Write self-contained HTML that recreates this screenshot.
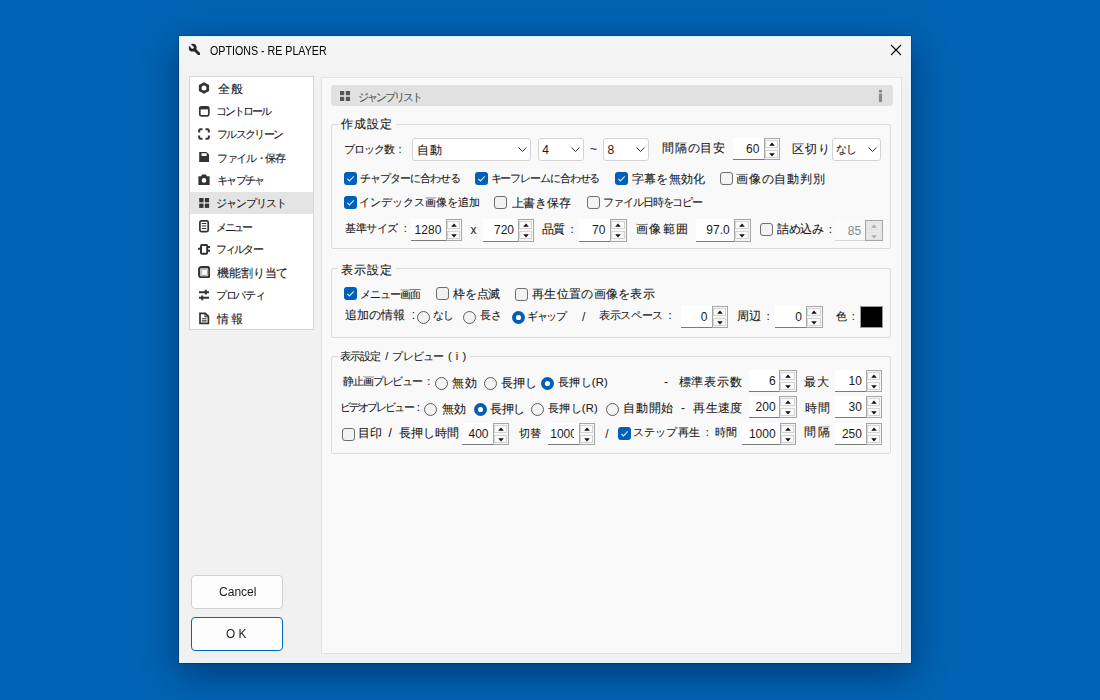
<!DOCTYPE html>
<html lang="ja"><head><meta charset="utf-8"><style>
html,body{margin:0;padding:0}
body{width:1100px;height:700px;overflow:hidden;position:relative;background:#0064b4;font-family:"Liberation Sans",sans-serif}
.a{position:absolute}
.t{position:absolute;white-space:pre;line-height:1;font-size:12px;transform-origin:0 0}
.num{transform:none}
.win{left:179px;top:36px;width:732px;height:627px;background:linear-gradient(#f5f5f5,#f1f1f1 60px,#f1f1f1);border:1px solid #e4f2fa;box-sizing:border-box;box-shadow:0 10px 36px rgba(0,15,50,.5),0 0 0 1px rgba(0,40,90,.3)}
.nav{left:189px;top:76px;width:123px;height:252px;background:#fff;border:1px solid #d6d6d6}
.sel{left:190px;top:192px;width:123px;height:22px;background:#e4e4e4}
.panel{left:321px;top:77px;width:579px;height:575px;background:#f9f9f9;border:1px solid #e3e3e3}
.hdr{left:331px;top:85px;width:562px;height:21px;background:#e1e1e1;border-radius:3px}
.grp{border:1px solid #dcdcdc;border-radius:2px}
.glab{background:#f9f9f9;height:8px}
.btn{border:1px solid #d0d0d0;border-radius:4px;background:#fdfdfd}
.okb{border:1px solid #0067c0;border-radius:4px;background:#fdfdfd}
.combo{background:#fff;border:1px solid #d4d4d4;border-radius:3px;box-sizing:border-box}
.spin-in{border-bottom:1px solid #7a7a7a;box-sizing:border-box}
.spin-btn{border:1px solid #a6a6a6;box-sizing:border-box}
.spin-sub{border:1px solid #d4d4d4;background:#fafafa;box-sizing:border-box}
</style></head><body>
<div class="a win"></div>
<div class="a nav"></div>
<div class="a sel"></div>
<div class="a btn" style="left:191px;top:575px;width:90px;height:32px"></div>
<div class="a okb" style="left:191px;top:617px;width:90px;height:32px"></div>
<div class="a panel"></div>
<div class="a hdr"></div>
<div class="a grp" style="left:331px;top:124px;width:558px;height:123px"></div>
<div class="a glab" style="left:338px;top:120px;width:58px"></div>
<div class="a grp" style="left:331px;top:268px;width:558px;height:68px"></div>
<div class="a glab" style="left:338px;top:264px;width:58px"></div>
<div class="a grp" style="left:331px;top:356px;width:558px;height:96px"></div>
<div class="a glab" style="left:338px;top:352px;width:132px"></div>
<div class="a" style="left:860px;top:306px;width:21px;height:20px;background:#000;border:1px solid #9a9a9a"></div>
<div class="t" style="left:590px;top:143px;font-size:12px;color:#1a1a1a">~</div>
<div class="t" style="left:664px;top:376px;color:#1a1a1a">-</div>
<div class="t" style="left:681px;top:402px;color:#1a1a1a">-</div>
<svg class="a" style="left:878px;top:89px" width="5" height="14" viewBox="0 0 5 14"><rect x="0.9" y="0.8" width="3.2" height="2.8" rx="1.2" fill="#8a8a8a"/><rect x="0.9" y="4.6" width="3.2" height="8.6" rx="1.2" fill="#8a8a8a"/></svg>
<svg class="a" style="left:198px;top:82px" width="12" height="12" viewBox="0 0 12 12"><path fill="#333" fill-rule="evenodd" d="M6 0.2L11.1 3.1V8.9L6 11.8L0.9 8.9V3.1Z M6 3.5A2.5 2.5 0 1 0 6 8.5A2.5 2.5 0 1 0 6 3.5Z"/></svg>
<svg class="a" style="left:198px;top:105px" width="12" height="12" viewBox="0 0 12 12"><rect x="1.8" y="1.8" width="9" height="9" rx="1.5" fill="none" stroke="#333" stroke-width="1.7"/><rect x="1.5" y="2" width="9.5" height="2.4" fill="#333"/></svg>
<svg class="a" style="left:198px;top:128px" width="12" height="12" viewBox="0 0 12 12"><path d="M1.2 4.5V2.5A1.3 1.3 0 0 1 2.5 1.2H4.5M7.5 1.2H9.5A1.3 1.3 0 0 1 10.8 2.5V4.5M10.8 7.5V9.5A1.3 1.3 0 0 1 9.5 10.8H7.5M4.5 10.8H2.5A1.3 1.3 0 0 1 1.2 9.5V7.5" fill="none" stroke="#333" stroke-width="2"/></svg>
<svg class="a" style="left:198px;top:151px" width="12" height="12" viewBox="0 0 12 12"><path fill="#333" fill-rule="evenodd" d="M1.2 1H8.5L11 3.5V11H1.2Z M3.5 2.2H8.7V5H3.5Z"/></svg>
<svg class="a" style="left:198px;top:174px" width="12" height="12" viewBox="0 0 12 12"><path fill="#333" fill-rule="evenodd" d="M4 0.6H8L8.8 2.2H11.6V11H0.4V2.2H3.2Z M6 4.1A2.3 2.3 0 1 0 6 8.7A2.3 2.3 0 1 0 6 4.1Z"/></svg>
<svg class="a" style="left:198px;top:197px" width="12" height="12" viewBox="0 0 12 12"><rect x="1.2" y="1" width="4.3" height="4.3" fill="#333"/><rect x="6.8" y="1" width="4.3" height="4.3" fill="#333"/><rect x="1.2" y="6.6" width="4.3" height="4.3" fill="#333"/><rect x="6.8" y="6.6" width="4.3" height="4.3" fill="#333"/></svg>
<svg class="a" style="left:198px;top:219px" width="12" height="14" viewBox="0 0 12 14"><rect x="1.9" y="1.9" width="8.3" height="10.8" rx="1.6" fill="none" stroke="#333" stroke-width="1.7"/><path d="M3.8 4.5H8.3M3.8 7H8.3M3.8 9.5H8.3" stroke="#333" stroke-width="1.2"/></svg>
<svg class="a" style="left:198px;top:243px" width="12" height="12" viewBox="0 0 12 12"><rect x="3" y="2.1" width="6.2" height="8.6" rx="1" fill="none" stroke="#333" stroke-width="2"/><path d="M0 5.7H2.5M9.5 3.9H12M9.5 7.8H12" stroke="#333" stroke-width="2"/></svg>
<svg class="a" style="left:198px;top:266px" width="12" height="12" viewBox="0 0 12 12"><rect x="1.1" y="1.1" width="10.2" height="10.2" rx="2.2" fill="none" stroke="#333" stroke-width="2.1"/><rect x="3.1" y="3.1" width="6.2" height="6.2" rx="0.8" fill="none" stroke="#8a8a8a" stroke-width="0.9"/></svg>
<svg class="a" style="left:198px;top:289px" width="12" height="12" viewBox="0 0 12 12"><path d="M1 3.2H11M1 8.8H11" stroke="#333" stroke-width="2"/><path d="M7.8 0.8V5.6M4.2 6.4V11.2" stroke="#333" stroke-width="2"/></svg>
<svg class="a" style="left:198px;top:312px" width="12" height="13" viewBox="0 0 12 13"><path fill="none" stroke="#333" stroke-width="1.7" d="M2 1.3H7.3L10.4 4.4V11.4H2Z"/><path d="M7 1.3V4.7H10.4" fill="none" stroke="#333" stroke-width="1.1"/><path d="M3.8 6.7H8.6M3.8 8.9H8.6" stroke="#333" stroke-width="1.1"/></svg>
<svg class="a" style="left:340px;top:91px" width="11" height="11" viewBox="0 0 11 11"><rect x="0" y="0" width="4.2" height="4.2" fill="#555"/><rect x="5.8" y="0" width="4.2" height="4.2" fill="#555"/><rect x="0" y="5.8" width="4.2" height="4.2" fill="#555"/><rect x="5.8" y="5.8" width="4.2" height="4.2" fill="#555"/></svg>

<svg class="a" style="left:188px;top:43px" width="13" height="13" viewBox="0 0 13 13"><defs><mask id="wm"><rect width="13" height="13" fill="#fff"/><path d="M4.6 4.6L0.5 0.5" stroke="#000" stroke-width="2.6"/><circle cx="4.6" cy="4.6" r="1.2" fill="#000"/></mask></defs><g mask="url(#wm)" fill="#262626"><circle cx="4.7" cy="4.7" r="3.9"/><path d="M4.7 4.7L11.2 11.2" stroke="#262626" stroke-width="2.9" stroke-linecap="round"/></g></svg>
<svg class="a" style="left:890px;top:44px" width="12" height="12" viewBox="0 0 12 12"><path d="M1 1L11 11M11 1L1 11" stroke="#000" stroke-width="1.1"/></svg>
<svg class="a" style="left:344px;top:172px" width="13" height="13" viewBox="0 0 13 13"><rect x="0" y="0" width="13" height="13" rx="3" fill="#005fb8"/><path d="M3.3 6.8L5.4 8.9L9.8 4.4" fill="none" stroke="#d8ecff" stroke-width="1.1"/></svg>
<svg class="a" style="left:475px;top:172px" width="13" height="13" viewBox="0 0 13 13"><rect x="0" y="0" width="13" height="13" rx="3" fill="#005fb8"/><path d="M3.3 6.8L5.4 8.9L9.8 4.4" fill="none" stroke="#d8ecff" stroke-width="1.1"/></svg>
<svg class="a" style="left:615px;top:172px" width="13" height="13" viewBox="0 0 13 13"><rect x="0" y="0" width="13" height="13" rx="3" fill="#005fb8"/><path d="M3.3 6.8L5.4 8.9L9.8 4.4" fill="none" stroke="#d8ecff" stroke-width="1.1"/></svg>
<svg class="a" style="left:720px;top:172px" width="13" height="13" viewBox="0 0 13 13"><rect x="0.5" y="0.5" width="12" height="12" rx="2.5" fill="#f2f2f2" stroke="#6e6e6e" stroke-width="1"/></svg>
<svg class="a" style="left:344px;top:196px" width="13" height="13" viewBox="0 0 13 13"><rect x="0" y="0" width="13" height="13" rx="3" fill="#005fb8"/><path d="M3.3 6.8L5.4 8.9L9.8 4.4" fill="none" stroke="#d8ecff" stroke-width="1.1"/></svg>
<svg class="a" style="left:494px;top:196px" width="13" height="13" viewBox="0 0 13 13"><rect x="0.5" y="0.5" width="12" height="12" rx="2.5" fill="#f2f2f2" stroke="#6e6e6e" stroke-width="1"/></svg>
<svg class="a" style="left:587px;top:196px" width="13" height="13" viewBox="0 0 13 13"><rect x="0.5" y="0.5" width="12" height="12" rx="2.5" fill="#f2f2f2" stroke="#6e6e6e" stroke-width="1"/></svg>
<svg class="a" style="left:760px;top:223px" width="13" height="13" viewBox="0 0 13 13"><rect x="0.5" y="0.5" width="12" height="12" rx="2.5" fill="#f2f2f2" stroke="#6e6e6e" stroke-width="1"/></svg>
<svg class="a" style="left:344px;top:287px" width="13" height="13" viewBox="0 0 13 13"><rect x="0" y="0" width="13" height="13" rx="3" fill="#005fb8"/><path d="M3.3 6.8L5.4 8.9L9.8 4.4" fill="none" stroke="#d8ecff" stroke-width="1.1"/></svg>
<svg class="a" style="left:436px;top:287px" width="13" height="13" viewBox="0 0 13 13"><rect x="0.5" y="0.5" width="12" height="12" rx="2.5" fill="#f2f2f2" stroke="#6e6e6e" stroke-width="1"/></svg>
<svg class="a" style="left:515px;top:288px" width="13" height="13" viewBox="0 0 13 13"><rect x="0.5" y="0.5" width="12" height="12" rx="2.5" fill="#f2f2f2" stroke="#6e6e6e" stroke-width="1"/></svg>
<svg class="a" style="left:342px;top:428px" width="13" height="13" viewBox="0 0 13 13"><rect x="0.5" y="0.5" width="12" height="12" rx="2.5" fill="#f2f2f2" stroke="#6e6e6e" stroke-width="1"/></svg>
<svg class="a" style="left:618px;top:427px" width="13" height="13" viewBox="0 0 13 13"><rect x="0" y="0" width="13" height="13" rx="3" fill="#005fb8"/><path d="M3.3 6.8L5.4 8.9L9.8 4.4" fill="none" stroke="#d8ecff" stroke-width="1.1"/></svg>
<svg class="a" style="left:417px;top:311px" width="13" height="13" viewBox="0 0 13 13"><circle cx="6.5" cy="6.5" r="6" fill="#f3f3f3" stroke="#5c5c5c" stroke-width="1"/></svg>
<svg class="a" style="left:463px;top:311px" width="13" height="13" viewBox="0 0 13 13"><circle cx="6.5" cy="6.5" r="6" fill="#f3f3f3" stroke="#5c5c5c" stroke-width="1"/></svg>
<svg class="a" style="left:512px;top:311px" width="13" height="13" viewBox="0 0 13 13"><circle cx="6.5" cy="6.5" r="6.5" fill="#005fb8"/><circle cx="6.5" cy="6.5" r="2.6" fill="#fff"/></svg>
<svg class="a" style="left:435px;top:377px" width="13" height="13" viewBox="0 0 13 13"><circle cx="6.5" cy="6.5" r="6" fill="#f3f3f3" stroke="#5c5c5c" stroke-width="1"/></svg>
<svg class="a" style="left:484px;top:377px" width="13" height="13" viewBox="0 0 13 13"><circle cx="6.5" cy="6.5" r="6" fill="#f3f3f3" stroke="#5c5c5c" stroke-width="1"/></svg>
<svg class="a" style="left:541px;top:377px" width="13" height="13" viewBox="0 0 13 13"><circle cx="6.5" cy="6.5" r="6.5" fill="#005fb8"/><circle cx="6.5" cy="6.5" r="2.6" fill="#fff"/></svg>
<svg class="a" style="left:424px;top:403px" width="13" height="13" viewBox="0 0 13 13"><circle cx="6.5" cy="6.5" r="6" fill="#f3f3f3" stroke="#5c5c5c" stroke-width="1"/></svg>
<svg class="a" style="left:474px;top:403px" width="13" height="13" viewBox="0 0 13 13"><circle cx="6.5" cy="6.5" r="6.5" fill="#005fb8"/><circle cx="6.5" cy="6.5" r="2.6" fill="#fff"/></svg>
<svg class="a" style="left:531px;top:403px" width="13" height="13" viewBox="0 0 13 13"><circle cx="6.5" cy="6.5" r="6" fill="#f3f3f3" stroke="#5c5c5c" stroke-width="1"/></svg>
<svg class="a" style="left:606px;top:403px" width="13" height="13" viewBox="0 0 13 13"><circle cx="6.5" cy="6.5" r="6" fill="#f3f3f3" stroke="#5c5c5c" stroke-width="1"/></svg>
<div class="a combo" style="left:412px;top:138px;width:119px;height:23px"></div>
<svg class="a" style="left:518px;top:147px" width="9" height="5" viewBox="0 0 9 5"><path d="M0.5 0.5L4.5 4.5L8.5 0.5" fill="none" stroke="#333" stroke-width="1"/></svg>
<div class="a combo" style="left:538px;top:138px;width:46px;height:23px"></div>
<svg class="a" style="left:571px;top:147px" width="9" height="5" viewBox="0 0 9 5"><path d="M0.5 0.5L4.5 4.5L8.5 0.5" fill="none" stroke="#333" stroke-width="1"/></svg>
<div class="a combo" style="left:603px;top:138px;width:46px;height:23px"></div>
<svg class="a" style="left:636px;top:147px" width="9" height="5" viewBox="0 0 9 5"><path d="M0.5 0.5L4.5 4.5L8.5 0.5" fill="none" stroke="#333" stroke-width="1"/></svg>
<div class="a combo" style="left:832px;top:138px;width:49px;height:23px"></div>
<svg class="a" style="left:868px;top:147px" width="9" height="5" viewBox="0 0 9 5"><path d="M0.5 0.5L4.5 4.5L8.5 0.5" fill="none" stroke="#333" stroke-width="1"/></svg>
<div class="a spin-in" style="left:733px;top:138px;width:31px;height:22px;background:#fff;"></div>
<div class="a spin-btn" style="left:764px;top:138px;width:16px;height:22px;background:#f7f7f7"></div>
<div class="a spin-sub" style="left:765px;top:140px;width:13px;height:8px;"></div>
<div class="a spin-sub" style="left:765px;top:150px;width:13px;height:8px;"></div>
<svg class="a" style="left:768.5px;top:142px" width="6" height="4" viewBox="0 0 6 4"><path d="M0.2 3.8L3 0.4L5.8 3.8Z" fill="#111"/></svg>
<svg class="a" style="left:768.5px;top:153px" width="6" height="4" viewBox="0 0 6 4"><path d="M0.2 0.2L3 3.6L5.8 0.2Z" fill="#111"/></svg>
<div class="t num" style="right:340.6px;top:143px;color:#1a1a1a;">60</div>
<div class="a spin-in" style="left:411px;top:219px;width:35px;height:22px;background:#fff;"></div>
<div class="a spin-btn" style="left:446px;top:219px;width:16px;height:22px;background:#f7f7f7"></div>
<div class="a spin-sub" style="left:447px;top:221px;width:13px;height:8px;"></div>
<div class="a spin-sub" style="left:447px;top:231px;width:13px;height:8px;"></div>
<svg class="a" style="left:450.5px;top:223px" width="6" height="4" viewBox="0 0 6 4"><path d="M0.2 3.8L3 0.4L5.8 3.8Z" fill="#111"/></svg>
<svg class="a" style="left:450.5px;top:234px" width="6" height="4" viewBox="0 0 6 4"><path d="M0.2 0.2L3 3.6L5.8 0.2Z" fill="#111"/></svg>
<div class="t num" style="right:658.7px;top:224px;color:#1a1a1a;">1280</div>
<div class="a spin-in" style="left:483px;top:219px;width:35px;height:23px;background:#fff;"></div>
<div class="a spin-btn" style="left:518px;top:219px;width:16px;height:23px;background:#f7f7f7"></div>
<div class="a spin-sub" style="left:519px;top:221px;width:13px;height:8px;"></div>
<div class="a spin-sub" style="left:519px;top:231px;width:13px;height:8px;"></div>
<svg class="a" style="left:522.5px;top:223px" width="6" height="4" viewBox="0 0 6 4"><path d="M0.2 3.8L3 0.4L5.8 3.8Z" fill="#111"/></svg>
<svg class="a" style="left:522.5px;top:234px" width="6" height="4" viewBox="0 0 6 4"><path d="M0.2 0.2L3 3.6L5.8 0.2Z" fill="#111"/></svg>
<div class="t num" style="right:586.0px;top:224px;color:#1a1a1a;">720</div>
<div class="a spin-in" style="left:579px;top:219px;width:31px;height:23px;background:#fff;"></div>
<div class="a spin-btn" style="left:610px;top:219px;width:17px;height:23px;background:#f7f7f7"></div>
<div class="a spin-sub" style="left:611px;top:221px;width:14px;height:8px;"></div>
<div class="a spin-sub" style="left:611px;top:231px;width:14px;height:8px;"></div>
<svg class="a" style="left:615.0px;top:223px" width="6" height="4" viewBox="0 0 6 4"><path d="M0.2 3.8L3 0.4L5.8 3.8Z" fill="#111"/></svg>
<svg class="a" style="left:615.0px;top:234px" width="6" height="4" viewBox="0 0 6 4"><path d="M0.2 0.2L3 3.6L5.8 0.2Z" fill="#111"/></svg>
<div class="t num" style="right:494.7px;top:224px;color:#1a1a1a;">70</div>
<div class="a spin-in" style="left:696px;top:219px;width:38px;height:23px;background:#fff;"></div>
<div class="a spin-btn" style="left:734px;top:219px;width:17px;height:23px;background:#f7f7f7"></div>
<div class="a spin-sub" style="left:735px;top:221px;width:14px;height:8px;"></div>
<div class="a spin-sub" style="left:735px;top:231px;width:14px;height:8px;"></div>
<svg class="a" style="left:739.0px;top:223px" width="6" height="4" viewBox="0 0 6 4"><path d="M0.2 3.8L3 0.4L5.8 3.8Z" fill="#111"/></svg>
<svg class="a" style="left:739.0px;top:234px" width="6" height="4" viewBox="0 0 6 4"><path d="M0.2 0.2L3 3.6L5.8 0.2Z" fill="#111"/></svg>
<div class="t num" style="right:370.3px;top:224px;color:#1a1a1a;">97.0</div>
<div class="a spin-in" style="left:835px;top:220px;width:30px;height:21px;background:#fbfbfb;border-bottom-color:#d6d6d6;"></div>
<div class="a spin-btn" style="left:865px;top:220px;width:18px;height:21px;background:#e9e9e9"></div>
<div class="a spin-sub" style="left:866px;top:222px;width:15px;height:8px;background:#e9e9e9;border-color:#e2e2e2;"></div>
<div class="a spin-sub" style="left:866px;top:232px;width:15px;height:8px;background:#e9e9e9;border-color:#e2e2e2;"></div>
<svg class="a" style="left:870.5px;top:224px" width="6" height="4" viewBox="0 0 6 4"><path d="M0.2 3.8L3 0.4L5.8 3.8Z" fill="#aaa"/></svg>
<svg class="a" style="left:870.5px;top:235px" width="6" height="4" viewBox="0 0 6 4"><path d="M0.2 0.2L3 3.6L5.8 0.2Z" fill="#aaa"/></svg>
<div class="t num" style="right:238.8px;top:225px;color:#888;">85</div>
<div class="a spin-in" style="left:681px;top:306px;width:31px;height:22px;background:#fff;"></div>
<div class="a spin-btn" style="left:712px;top:306px;width:16px;height:22px;background:#f7f7f7"></div>
<div class="a spin-sub" style="left:713px;top:308px;width:13px;height:8px;"></div>
<div class="a spin-sub" style="left:713px;top:318px;width:13px;height:8px;"></div>
<svg class="a" style="left:716.5px;top:310px" width="6" height="4" viewBox="0 0 6 4"><path d="M0.2 3.8L3 0.4L5.8 3.8Z" fill="#111"/></svg>
<svg class="a" style="left:716.5px;top:321px" width="6" height="4" viewBox="0 0 6 4"><path d="M0.2 0.2L3 3.6L5.8 0.2Z" fill="#111"/></svg>
<div class="t num" style="right:392.5px;top:311px;color:#1a1a1a;">0</div>
<div class="a spin-in" style="left:775px;top:306px;width:31px;height:22px;background:#fff;"></div>
<div class="a spin-btn" style="left:806px;top:306px;width:17px;height:22px;background:#f7f7f7"></div>
<div class="a spin-sub" style="left:807px;top:308px;width:14px;height:8px;"></div>
<div class="a spin-sub" style="left:807px;top:318px;width:14px;height:8px;"></div>
<svg class="a" style="left:811.0px;top:310px" width="6" height="4" viewBox="0 0 6 4"><path d="M0.2 3.8L3 0.4L5.8 3.8Z" fill="#111"/></svg>
<svg class="a" style="left:811.0px;top:321px" width="6" height="4" viewBox="0 0 6 4"><path d="M0.2 0.2L3 3.6L5.8 0.2Z" fill="#111"/></svg>
<div class="t num" style="right:298.1px;top:311px;color:#1a1a1a;">0</div>
<div class="a spin-in" style="left:749px;top:370px;width:30px;height:22px;background:#fff;"></div>
<div class="a spin-btn" style="left:779px;top:370px;width:18px;height:22px;background:#f7f7f7"></div>
<div class="a spin-sub" style="left:780px;top:372px;width:15px;height:8px;"></div>
<div class="a spin-sub" style="left:780px;top:382px;width:15px;height:8px;"></div>
<svg class="a" style="left:784.5px;top:374px" width="6" height="4" viewBox="0 0 6 4"><path d="M0.2 3.8L3 0.4L5.8 3.8Z" fill="#111"/></svg>
<svg class="a" style="left:784.5px;top:385px" width="6" height="4" viewBox="0 0 6 4"><path d="M0.2 0.2L3 3.6L5.8 0.2Z" fill="#111"/></svg>
<div class="t num" style="right:324.4px;top:375px;color:#1a1a1a;">6</div>
<div class="a spin-in" style="left:835px;top:370px;width:31px;height:22px;background:#fff;"></div>
<div class="a spin-btn" style="left:866px;top:370px;width:16px;height:22px;background:#f7f7f7"></div>
<div class="a spin-sub" style="left:867px;top:372px;width:13px;height:8px;"></div>
<div class="a spin-sub" style="left:867px;top:382px;width:13px;height:8px;"></div>
<svg class="a" style="left:870.5px;top:374px" width="6" height="4" viewBox="0 0 6 4"><path d="M0.2 3.8L3 0.4L5.8 3.8Z" fill="#111"/></svg>
<svg class="a" style="left:870.5px;top:385px" width="6" height="4" viewBox="0 0 6 4"><path d="M0.2 0.2L3 3.6L5.8 0.2Z" fill="#111"/></svg>
<div class="t num" style="right:238.1px;top:375px;color:#1a1a1a;">10</div>
<div class="a spin-in" style="left:749px;top:396px;width:30px;height:22px;background:#fff;"></div>
<div class="a spin-btn" style="left:779px;top:396px;width:18px;height:22px;background:#f7f7f7"></div>
<div class="a spin-sub" style="left:780px;top:398px;width:15px;height:8px;"></div>
<div class="a spin-sub" style="left:780px;top:408px;width:15px;height:8px;"></div>
<svg class="a" style="left:784.5px;top:400px" width="6" height="4" viewBox="0 0 6 4"><path d="M0.2 3.8L3 0.4L5.8 3.8Z" fill="#111"/></svg>
<svg class="a" style="left:784.5px;top:411px" width="6" height="4" viewBox="0 0 6 4"><path d="M0.2 0.2L3 3.6L5.8 0.2Z" fill="#111"/></svg>
<div class="t num" style="right:324.4px;top:401px;color:#1a1a1a;">200</div>
<div class="a spin-in" style="left:835px;top:396px;width:31px;height:22px;background:#fff;"></div>
<div class="a spin-btn" style="left:866px;top:396px;width:16px;height:22px;background:#f7f7f7"></div>
<div class="a spin-sub" style="left:867px;top:398px;width:13px;height:8px;"></div>
<div class="a spin-sub" style="left:867px;top:408px;width:13px;height:8px;"></div>
<svg class="a" style="left:870.5px;top:400px" width="6" height="4" viewBox="0 0 6 4"><path d="M0.2 3.8L3 0.4L5.8 3.8Z" fill="#111"/></svg>
<svg class="a" style="left:870.5px;top:411px" width="6" height="4" viewBox="0 0 6 4"><path d="M0.2 0.2L3 3.6L5.8 0.2Z" fill="#111"/></svg>
<div class="t num" style="right:238.1px;top:401px;color:#1a1a1a;">30</div>
<div class="a spin-in" style="left:462px;top:423px;width:31px;height:22px;background:#fff;"></div>
<div class="a spin-btn" style="left:493px;top:423px;width:16px;height:22px;background:#f7f7f7"></div>
<div class="a spin-sub" style="left:494px;top:425px;width:13px;height:8px;"></div>
<div class="a spin-sub" style="left:494px;top:435px;width:13px;height:8px;"></div>
<svg class="a" style="left:497.5px;top:427px" width="6" height="4" viewBox="0 0 6 4"><path d="M0.2 3.8L3 0.4L5.8 3.8Z" fill="#111"/></svg>
<svg class="a" style="left:497.5px;top:438px" width="6" height="4" viewBox="0 0 6 4"><path d="M0.2 0.2L3 3.6L5.8 0.2Z" fill="#111"/></svg>
<div class="t num" style="right:611.5px;top:428px;color:#1a1a1a;">400</div>
<div class="a spin-in" style="left:548px;top:423px;width:31px;height:22px;background:#fff;"></div>
<div class="a spin-btn" style="left:579px;top:423px;width:16px;height:22px;background:#f7f7f7"></div>
<div class="a spin-sub" style="left:580px;top:425px;width:13px;height:8px;"></div>
<div class="a spin-sub" style="left:580px;top:435px;width:13px;height:8px;"></div>
<svg class="a" style="left:583.5px;top:427px" width="6" height="4" viewBox="0 0 6 4"><path d="M0.2 3.8L3 0.4L5.8 3.8Z" fill="#111"/></svg>
<svg class="a" style="left:583.5px;top:438px" width="6" height="4" viewBox="0 0 6 4"><path d="M0.2 0.2L3 3.6L5.8 0.2Z" fill="#111"/></svg>
<div class="t num" style="right:523.1px;top:428px;color:#1a1a1a;clip-path:inset(0 3px 0 0);">1000</div>
<div class="a spin-in" style="left:742px;top:423px;width:38px;height:22px;background:#fff;"></div>
<div class="a spin-btn" style="left:780px;top:423px;width:16px;height:22px;background:#f7f7f7"></div>
<div class="a spin-sub" style="left:781px;top:425px;width:13px;height:8px;"></div>
<div class="a spin-sub" style="left:781px;top:435px;width:13px;height:8px;"></div>
<svg class="a" style="left:784.5px;top:427px" width="6" height="4" viewBox="0 0 6 4"><path d="M0.2 3.8L3 0.4L5.8 3.8Z" fill="#111"/></svg>
<svg class="a" style="left:784.5px;top:438px" width="6" height="4" viewBox="0 0 6 4"><path d="M0.2 0.2L3 3.6L5.8 0.2Z" fill="#111"/></svg>
<div class="t num" style="right:324.4px;top:428px;color:#1a1a1a;">1000</div>
<div class="a spin-in" style="left:835px;top:423px;width:31px;height:22px;background:#fff;"></div>
<div class="a spin-btn" style="left:866px;top:423px;width:16px;height:22px;background:#f7f7f7"></div>
<div class="a spin-sub" style="left:867px;top:425px;width:13px;height:8px;"></div>
<div class="a spin-sub" style="left:867px;top:435px;width:13px;height:8px;"></div>
<svg class="a" style="left:870.5px;top:427px" width="6" height="4" viewBox="0 0 6 4"><path d="M0.2 3.8L3 0.4L5.8 3.8Z" fill="#111"/></svg>
<svg class="a" style="left:870.5px;top:438px" width="6" height="4" viewBox="0 0 6 4"><path d="M0.2 0.2L3 3.6L5.8 0.2Z" fill="#111"/></svg>
<div class="t num" style="right:238.1px;top:428px;color:#1a1a1a;">250</div>
<div class="t" style="left:209.50px;top:45.00px;color:#000;font-size:12px;transform:scaleX(0.889)">OPTIONS - RE PLAYER</div>
<div class="t" style="left:217.80px;top:82.85px;color:#1a1a1a;font-size:12.30px;-webkit-text-stroke:0.1px currentColor;letter-spacing:0.800px">全般</div>
<div class="t" style="left:215.80px;top:105.95px;color:#1a1a1a;font-size:11.00px;-webkit-text-stroke:0.1px currentColor;letter-spacing:-2.000px">コントロール</div>
<div class="t" style="left:217.00px;top:128.50px;color:#1a1a1a;font-size:11.00px;-webkit-text-stroke:0.1px currentColor;letter-spacing:-1.667px">フルスクリーン</div>
<div class="t" style="left:217.00px;top:152.50px;color:#1a1a1a;font-size:11.00px;-webkit-text-stroke:0.1px currentColor;letter-spacing:-1.333px">ファイル・保存</div>
<div class="t" style="left:217.00px;top:175.00px;color:#1a1a1a;font-size:11.00px;-webkit-text-stroke:0.1px currentColor;letter-spacing:-1.750px">キャプチャ</div>
<div class="t" style="left:216.00px;top:197.75px;color:#1a1a1a;font-size:11.00px;-webkit-text-stroke:0.1px currentColor;letter-spacing:-1.067px">ジャンプリスト</div>
<div class="t" style="left:216.00px;top:222.15px;color:#1a1a1a;font-size:11.00px;-webkit-text-stroke:0.1px currentColor;letter-spacing:-2.333px">メニュー</div>
<div class="t" style="left:216.00px;top:243.60px;color:#1a1a1a;font-size:11.00px;-webkit-text-stroke:0.1px currentColor;letter-spacing:-1.850px">フィルター</div>
<div class="t" style="left:217.00px;top:267.75px;color:#1a1a1a;font-size:11.91px;-webkit-text-stroke:0.1px currentColor;letter-spacing:-0.120px">機能割り当て</div>
<div class="t" style="left:216.00px;top:290.35px;color:#1a1a1a;font-size:11.00px;-webkit-text-stroke:0.1px currentColor;letter-spacing:-1.275px">プロパティ</div>
<div class="t" style="left:217.00px;top:312.95px;color:#1a1a1a;font-size:12.30px;-webkit-text-stroke:0.1px currentColor;letter-spacing:2.400px">情報</div>
<div class="t" style="left:357.60px;top:91.50px;color:#555;font-size:11.00px;-webkit-text-stroke:0.1px currentColor;letter-spacing:-1.850px">ジャンプリスト</div>
<div class="t" style="left:341.00px;top:118.25px;color:#1a1a1a;font-size:12.30px;-webkit-text-stroke:0.1px currentColor;letter-spacing:1.000px">作成設定</div>
<div class="t" style="left:344.20px;top:143.55px;color:#1a1a1a;font-size:11.00px;-webkit-text-stroke:0.1px currentColor;word-spacing:3px;letter-spacing:-1.117px">ブロック数 :</div>
<div class="t" style="left:416.70px;top:143.50px;color:#1a1a1a;font-size:12.30px;-webkit-text-stroke:0.1px currentColor;letter-spacing:1.600px">自動</div>
<div class="t" style="left:662.00px;top:142.40px;color:#1a1a1a;font-size:12.30px;-webkit-text-stroke:0.1px currentColor;letter-spacing:0.750px">間隔の目安</div>
<div class="t" style="left:792.40px;top:143.00px;color:#1a1a1a;font-size:12.17px;-webkit-text-stroke:0.1px currentColor;letter-spacing:0.600px">区切り</div>
<div class="t" style="left:835.60px;top:143.70px;color:#1a1a1a;font-size:11.00px;-webkit-text-stroke:0.1px currentColor;letter-spacing:-0.400px">なし</div>
<div class="t" style="left:360.00px;top:173.25px;color:#1a1a1a;font-size:11.00px;-webkit-text-stroke:0.1px currentColor;letter-spacing:-0.956px">チャプターに合わせる</div>
<div class="t" style="left:490.60px;top:173.25px;color:#1a1a1a;font-size:11.00px;-webkit-text-stroke:0.1px currentColor;letter-spacing:-1.120px">キーフレームに合わせる</div>
<div class="t" style="left:631.90px;top:172.75px;color:#1a1a1a;font-size:12.25px;-webkit-text-stroke:0.1px currentColor;letter-spacing:0.300px">字幕を無効化</div>
<div class="t" style="left:735.90px;top:172.75px;color:#1a1a1a;font-size:12.30px;-webkit-text-stroke:0.1px currentColor;letter-spacing:0.867px">画像の自動判別</div>
<div class="t" style="left:359.00px;top:197.10px;color:#1a1a1a;font-size:11.01px;-webkit-text-stroke:0.1px currentColor;letter-spacing:0.010px">インデックス画像を追加</div>
<div class="t" style="left:511.50px;top:197.60px;color:#1a1a1a;font-size:11.84px;-webkit-text-stroke:0.1px currentColor;letter-spacing:-0.200px">上書き保存</div>
<div class="t" style="left:603.20px;top:197.10px;color:#1a1a1a;font-size:11.00px;-webkit-text-stroke:0.1px currentColor;letter-spacing:-1.111px">ファイル日時をコピー</div>
<div class="t" style="left:344.90px;top:222.90px;color:#1a1a1a;font-size:11.00px;-webkit-text-stroke:0.1px currentColor;word-spacing:3px;letter-spacing:-0.383px">基準サイズ :</div>
<div class="t" style="left:541.80px;top:223.75px;color:#1a1a1a;font-size:11.51px;-webkit-text-stroke:0.1px currentColor;word-spacing:3px;letter-spacing:-0.533px">品質 :</div>
<div class="t" style="left:635.80px;top:222.75px;color:#1a1a1a;font-size:12.30px;-webkit-text-stroke:0.1px currentColor;letter-spacing:1.467px">画像範囲</div>
<div class="t" style="left:777.00px;top:224.40px;color:#1a1a1a;font-size:11.55px;-webkit-text-stroke:0.1px currentColor;word-spacing:3px;letter-spacing:-0.480px">詰め込み :</div>
<div class="t" style="left:340.70px;top:263.65px;color:#1a1a1a;font-size:12.30px;-webkit-text-stroke:0.1px currentColor;letter-spacing:1.133px">表示設定</div>
<div class="t" style="left:359.70px;top:288.50px;color:#1a1a1a;font-size:11.00px;-webkit-text-stroke:0.1px currentColor;letter-spacing:-0.900px">メニュー画面</div>
<div class="t" style="left:453.40px;top:287.65px;color:#1a1a1a;font-size:11.78px;-webkit-text-stroke:0.1px currentColor;letter-spacing:-0.300px">枠を点滅</div>
<div class="t" style="left:532.10px;top:287.65px;color:#1a1a1a;font-size:12.27px;-webkit-text-stroke:0.1px currentColor;letter-spacing:0.300px">再生位置の画像を表示</div>
<div class="t" style="left:344.80px;top:309.35px;color:#1a1a1a;font-size:12.13px;-webkit-text-stroke:0.1px currentColor;word-spacing:3px;letter-spacing:0.083px">追加の情報 :</div>
<div class="t" style="left:433.10px;top:310.00px;color:#1a1a1a;font-size:11.00px;-webkit-text-stroke:0.1px currentColor;letter-spacing:-0.600px">なし</div>
<div class="t" style="left:480.30px;top:310.30px;color:#1a1a1a;font-size:11.11px;-webkit-text-stroke:0.1px currentColor;letter-spacing:0.200px">長さ</div>
<div class="t" style="left:527.40px;top:310.80px;color:#1a1a1a;font-size:11.00px;-webkit-text-stroke:0.1px currentColor;letter-spacing:-1.600px">ギャップ</div>
<div class="t" style="left:599.20px;top:310.30px;color:#1a1a1a;font-size:11.00px;-webkit-text-stroke:0.1px currentColor;word-spacing:3px;letter-spacing:-0.386px">表示スペース :</div>
<div class="t" style="left:736.70px;top:309.85px;color:#1a1a1a;font-size:11.62px;-webkit-text-stroke:0.1px currentColor;word-spacing:3px;letter-spacing:-0.100px">周辺 :</div>
<div class="t" style="left:835.90px;top:311.00px;color:#1a1a1a;font-size:11.00px;-webkit-text-stroke:0.1px currentColor;word-spacing:3px;letter-spacing:-0.650px">色 :</div>
<div class="t" style="left:339.70px;top:351.40px;color:#1a1a1a;font-size:11.00px;-webkit-text-stroke:0.1px currentColor;word-spacing:3px;letter-spacing:-0.918px">表示設定 / プレビュー ( i )</div>
<div class="t" style="left:342.70px;top:376.10px;color:#1a1a1a;font-size:11.00px;-webkit-text-stroke:0.1px currentColor;word-spacing:3px;letter-spacing:-1.044px">静止画プレビュー :</div>
<div class="t" style="left:452.30px;top:377.40px;color:#1a1a1a;font-size:12.30px;-webkit-text-stroke:0.1px currentColor;letter-spacing:0.700px">無効</div>
<div class="t" style="left:500.90px;top:376.50px;color:#1a1a1a;font-size:12.06px;-webkit-text-stroke:0.1px currentColor;letter-spacing:0.000px">長押し</div>
<div class="t" style="left:558.10px;top:377.25px;color:#1a1a1a;font-size:11.25px;-webkit-text-stroke:0.1px currentColor;letter-spacing:0.220px">長押し(R)</div>
<div class="t" style="left:678.50px;top:375.70px;color:#1a1a1a;font-size:12.30px;-webkit-text-stroke:0.1px currentColor;letter-spacing:0.825px">標準表示数</div>
<div class="t" style="left:803.70px;top:375.55px;color:#1a1a1a;font-size:12.15px;-webkit-text-stroke:0.1px currentColor;letter-spacing:1.300px">最大</div>
<div class="t" style="left:340.30px;top:402.25px;color:#1a1a1a;font-size:11.00px;-webkit-text-stroke:0.1px currentColor;word-spacing:3px;letter-spacing:-1.967px">ビデオプレビュー :</div>
<div class="t" style="left:441.60px;top:403.20px;color:#1a1a1a;font-size:12.30px;-webkit-text-stroke:0.1px currentColor;letter-spacing:0.800px">無効</div>
<div class="t" style="left:489.90px;top:403.50px;color:#1a1a1a;font-size:11.92px;-webkit-text-stroke:0.1px currentColor;letter-spacing:-0.200px">長押し</div>
<div class="t" style="left:548.30px;top:403.25px;color:#1a1a1a;font-size:11.18px;-webkit-text-stroke:0.1px currentColor;letter-spacing:0.160px">長押し(R)</div>
<div class="t" style="left:623.00px;top:402.25px;color:#1a1a1a;font-size:12.30px;-webkit-text-stroke:0.1px currentColor;letter-spacing:0.833px">自動開始</div>
<div class="t" style="left:693.10px;top:402.00px;color:#1a1a1a;font-size:12.30px;-webkit-text-stroke:0.1px currentColor;letter-spacing:0.467px">再生速度</div>
<div class="t" style="left:804.70px;top:401.60px;color:#1a1a1a;font-size:12.30px;-webkit-text-stroke:0.1px currentColor;letter-spacing:1.300px">時間</div>
<div class="t" style="left:357.70px;top:427.30px;color:#1a1a1a;font-size:12.04px;-webkit-text-stroke:0.1px currentColor;word-spacing:3px;letter-spacing:0.167px">目印 / 長押し時間</div>
<div class="t" style="left:518.80px;top:427.50px;color:#1a1a1a;font-size:11.05px;-webkit-text-stroke:0.1px currentColor;letter-spacing:0.100px">切替</div>
<div class="t" style="left:633.20px;top:427.10px;color:#1a1a1a;font-size:11.09px;-webkit-text-stroke:0.1px currentColor;word-spacing:3px;letter-spacing:0.080px">ステップ再生 : 時間</div>
<div class="t" style="left:803.70px;top:426.35px;color:#1a1a1a;font-size:12.30px;-webkit-text-stroke:0.1px currentColor;letter-spacing:2.300px">間隔</div>
<div class="t" style="left:218.60px;top:586.10px;color:#1a1a1a;font-size:12px;transform:scaleX(1.003)">Cancel</div>
<div class="t" style="left:226.40px;top:628.20px;color:#1a1a1a;font-size:12px;transform:scaleX(0.986)">O K</div>
<div class="t" style="left:542.30px;top:144.15px;color:#1a1a1a;font-size:12px;transform:scaleX(1.000)">4</div>
<div class="t" style="left:607.60px;top:144.15px;color:#1a1a1a;font-size:12px;transform:scaleX(1.000)">8</div>
<div class="t" style="left:470.60px;top:223.90px;color:#1a1a1a;font-size:12px;transform:scaleX(1.000)">x</div>
<div class="t" style="left:582.00px;top:310.50px;color:#1a1a1a;font-size:12px;transform:scaleX(1.000)">/</div>
<div class="t" style="left:605.20px;top:428.00px;color:#1a1a1a;font-size:12px;transform:scaleX(1.000)">/</div>
</body></html>
